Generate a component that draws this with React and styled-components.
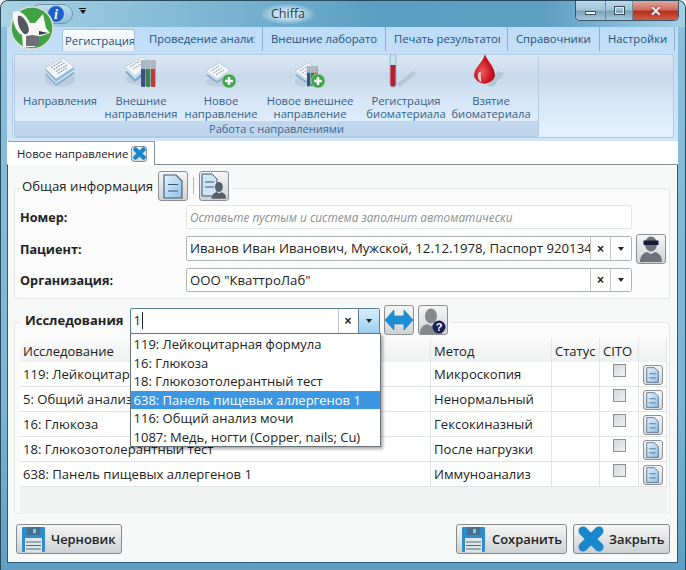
import React from "react";
import styled, { createGlobalStyle } from "styled-components";

const Global = createGlobalStyle`
  html, body { margin: 0; padding: 0; background: #fff; }
  body { font-family: "Open Sans", "Noto Sans", sans-serif; }
  * { box-sizing: border-box; }
`;

const Window = styled.div`
  position: relative; width: 686px; height: 570px; overflow: hidden;
  border-radius: 8px 8px 0 0; border: 1px solid #2a4a5e; border-bottom: 0;
  display: flex; flex-direction: column;
  background: linear-gradient(180deg, #8cbfdb 0%, #7db5d4 70%, #5f9fc3 100%);
`;
const TitleBar = styled.div`
  height: 26px; flex: none; position: relative; display: flex; align-items: flex-start; justify-content: center;
  background: linear-gradient(90deg, #a9d2e4 0%, #84bbd6 25%, #5b9ec3 55%, #5f9fc4 80%, #a4d0e4 100%);
`;
const Title = styled.div`
  margin-top: 3px; margin-right: 110px; padding: 0 10px; font-size: 12.5px; line-height: 20px; color: #2a3a44;
  background: radial-gradient(ellipse at center, rgba(225,240,247,.8) 30%, rgba(225,240,247,0) 75%);
`;
const QuickAccess = styled.div`
  position: absolute; left: 29px; top: 3px; width: 43px; height: 20px; border-radius: 10px;
  border: 1px solid #6e97ad; background: linear-gradient(180deg,#bcdcea,#8fbfd8);
`;
const QuickMenu = styled.div`
  position: absolute; left: 78px; top: 7px; display: flex; flex-direction: column; align-items: center; gap: 1px;
  &::before { content: ""; width: 7px; height: 1px; background: #111; }
  &::after { content: ""; border: 3.5px solid transparent; border-top: 4px solid #111; border-bottom: 0; }
`;
const LogoBox = styled.div`position: absolute; left: 9px; top: 5px; width: 44px; height: 44px; z-index: 3;`;
const InfoBox = styled.div`position: absolute; left: 46px; top: 4px; width: 18px; height: 18px; z-index: 2;`;
const WinButtons = styled.div`
  position: absolute; right: 6px; top: 0; height: 20px; display: flex; overflow: hidden;
  border: 1px solid #3c5566; border-top: 0; border-radius: 0 0 5px 5px;
`;
const WinBtn = styled.div`
  width: ${p => p.$w}px; display: flex; align-items: center; justify-content: center;
  border-left: ${p => (p.$first ? "0" : "1px solid #6d8fa3")};
  background: ${p => p.$close
    ? "linear-gradient(180deg,#e2a79c 0%,#cf6e5e 45%,#b5301f 55%,#cf5f48 100%)"
    : "linear-gradient(180deg,#bed9e8 0%,#a2c4d8 45%,#7ba3bb 55%,#a5c8da 100%)"};
`;
const MinGlyph = styled.i`display:block; width: 11px; height: 4px; margin-top: 5px; background:#eef5f9; border:1px solid #3c5566;`;
const MaxGlyph = styled.i`display:block; width: 11px; height: 9px; background:transparent; border:1px solid #34495a; box-shadow: inset 0 0 0 1px #dfeef5;`;
const CloseGlyph = styled.span`font: bold 14px/1 "Liberation Sans", sans-serif; color:#f4f0ee; text-shadow: 0 0 2px #5c1a10;`;

const Body = styled.div`flex: 1; display: flex; flex-direction: column; margin: 0 7px 7px 6px; min-height: 0;`;
const TabStrip = styled.div`
  height: 24px; flex: none; display: flex; padding-left: 55px;
  background: linear-gradient(180deg,#bcdcf7,#c4def7); align-items: flex-end;
`;
const Tab = styled.div`
  width: ${p => p.$w}px; height: ${p => (p.$active ? 22 : 24)}px;
  padding: 0 ${p => (p.$active ? 0 : 7)}px 0 ${p => (p.$active ? 2 : 8)}px; margin-right: ${p => (p.$active ? 6 : 0)}px;
  font-size: ${p => (p.$active ? 11.4 : 11.3)}px; line-height: ${p => (p.$active ? 22 : 24)}px; color: #23507a;
  background: ${p => (p.$active ? "linear-gradient(180deg,#fbfdff,#e4eff9)" : "transparent")};
  border: ${p => (p.$active ? "1px solid #a7c3dc" : "0")}; border-bottom: 0;
  border-right: ${p => (p.$active ? "1px solid #a7c3dc" : "1px solid #8fb0cc")};
  border-radius: ${p => (p.$active ? "3px 3px 0 0" : "0")};
`;
const TabLabel = styled.div`overflow: hidden; white-space: nowrap;`;
const Ribbon = styled.div`
  height: 90px; flex: none; padding: 3px 4px 3px 6px; background: linear-gradient(180deg,#c4def7,#d0e5f8);
`;
const RibbonInner = styled.div`
  height: 100%; margin-right: 0; width: 662px; margin-left: -1px; display: flex;
  border: 1px solid #b3cbe0; border-radius: 3px;
  background: linear-gradient(180deg,#dbe6f3 0%,#cfdeef 18%,#c6d8ea 26%,#d6e6f6 55%,#e4f2fd 100%);
`;
const Group = styled.div`
  width: 525px; display: flex; flex-direction: column; margin: 1px 0 0 1px;
  border: 1px solid #b3cbe0; border-top: 0; border-radius: 3px;
`;
const GroupItems = styled.div`flex: 1; display: flex; padding-left: 5px;`;
const RibbonBtn = styled.div`
  width: ${p => p.$w}px; display: flex; flex-direction: column; align-items: center; padding-top: 1px;
`;
const IconSlot = styled.div`
  height: 34px; width: 100%; padding: 0 ${p => p.$pr || 0}px 3px 0; display: flex; align-items: flex-end; justify-content: center;
`;
const RibbonText = styled.div`
  margin-top: 3px; font-size: 11.2px; line-height: 13px; color: #34608a; text-align: center; white-space: nowrap;
`;
const GroupLabel = styled.div`
  height: 15px; flex: none; text-align: center; font-size: 11px; line-height: 15px; color: #3b6690;
  background: linear-gradient(180deg,#c1d7ed,#bdd4eb);
`;

const DocTabs = styled.div`
  height: 24px; flex: none; display: flex; background: #fff; padding-left: 1px;
  border-bottom: 1px solid #858b8f;
`;
const DocTab = styled.div`
  width: 147px; height: 24px; display: flex; align-items: center; padding-left: 9px; gap: 3px;
  font-size: 11.3px; color: #222; background: #fff; border-top: 1px solid #99a; border-right: 1px solid #858b8f;
  position: relative;
`;
const DocClose = styled.span`
  width: 16px; height: 16px; display: flex; align-items: center; justify-content: center;
  border: 1px solid #8a9094; border-radius: 3px; background: linear-gradient(180deg,#f0f0f0,#d4d6d8);
`;
const Panel = styled.div`
  flex: 1; min-height: 0; background: #f7f8f8; padding: 6px 7px 0 6px; display: flex; flex-direction: column;
  border-left: 1px solid #2d5a78; border-right: 1px solid #2d5a78; border-bottom: 1px solid #2d5a78;
`;
const Field = styled.fieldset`
  margin: 0 0 6px 0; padding: 0 5px ${p => p.$pb}px 5px; min-width: 0; height: ${p => p.$h}px;
  border: 1px solid #e4e6e6; border-radius: 3px; background: #fbfbfb;
`;
const Legend = styled.legend`
  padding: 0 3px 4px ${p => p.$pl}px; margin-left: 0; height: 34px; display: flex; align-items: flex-start; background: transparent;
`;
const LegendText = styled.span`
  height: 30px; line-height: 30px; font-size: ${p => (p.$bold ? 13 : 13.2)}px; color: #222; margin-right: 5px;
  font-weight: ${p => (p.$bold ? 700 : 400)};
`;
const ToolBtn = styled.button`
  width: 30px; height: 30px; padding: 0; display: flex; align-items: center; justify-content: center;
  border: 1px solid #8a9094; border-radius: 3px; background: linear-gradient(180deg,#f5f5f5,#cfd2d4);
  margin-left: ${p => p.$ml || 0}px; flex: none;
`;
const Sep = styled.span`width: 1px; height: 17px; margin: 6px 5px 0 5px; background: #b4b8bb;`;
const Row = styled.div`
  display: flex; align-items: center; height: ${p => p.$h}px; margin-bottom: ${p => p.$mb}px;
`;
const Label = styled.div`width: 166px; flex: none; font-size: 12.7px; font-weight: 700; color: #222;`;
const Combo = styled.div`
  position: relative; width: ${p => p.$w}px; height: 100%; display: flex; background: #fff;
  border: 1px solid ${p => (p.$focus ? "#5c7f96" : p.$soft ? "#e3e5e6" : "#aeb3b6")}; border-radius: 2px;
`;
const ComboText = styled.div`
  flex: 1; min-width: 0; overflow: hidden; white-space: nowrap; padding-left: 3px;
  font-size: ${p => (p.$hint ? 11.8 : 13.2)}px; line-height: 23px;
  color: ${p => (p.$hint ? "#8b8f92" : "#222")}; font-style: ${p => (p.$hint ? "italic" : "normal")};
`;
const Caret = styled.span`display:inline-block; width:1px; height:17px; background:#222; margin: 3px 0 0 1px; vertical-align: top;`;
const ClearBtn = styled.div`
  width: 20px; flex: none; border-left: 1px solid #c3c7ca; background: #fff; display:flex; align-items:center; justify-content:center;
  font: bold 12px/1 "Liberation Sans", sans-serif; color: #222;
`;
const DropBtn = styled.div`
  width: 21px; flex: none; border-left: 1px solid ${p => (p.$on ? "#5c7f96" : "#c3c7ca")}; display:flex; align-items:center; justify-content:center;
  background: ${p => (p.$on ? "linear-gradient(180deg,#d8edfb,#9bcfee)" : "#fff")};
  &::after { content:""; border: 3.5px solid transparent; border-top: 4px solid #222; border-bottom: 0; }
`;
const SideBtn = styled(ToolBtn)`margin: -3px 0 -3px 4px;`;
const ComboHost = styled.div`height: 26px; margin: 3px 4px 0 1px; display: flex;`;
const Dropdown = styled.div`
  position: absolute; left: -1px; top: 24px; width: 251px; height: 114px; z-index: 5; padding: 1px 0 0;
  background: #fff; border: 1px solid #6c7378; box-shadow: 2px 2px 3px rgba(0,0,0,.35);
`;
const DropItem = styled.div`
  height: 18.6px; line-height: 18.6px; padding-left: 3px; font-size: 13px; white-space: nowrap;
  color: ${p => (p.$sel ? "#fff" : "#222")}; background: ${p => (p.$sel ? "#3b97e4" : "transparent")};
`;

const Grid = styled.div`
  margin: -1px 0 0 0; width: 647px; height: 176px; background: #f1f2f2;
  display: grid; grid-template-columns: 411px 121px 48px 39px 28px; grid-auto-rows: 25px;
`;
const HeadCell = styled.div`
  height: 24px; padding-left: 3px; font-size: 13px; line-height: 26px; color: #222; white-space: nowrap;
  background: linear-gradient(180deg,#fafafa,#eff0f0); border-right: 1px solid #e3e5e6;
`;
const Cell = styled.div`
  height: 25px; margin-top: -1px; background: #fff; border-right: 1px solid #e1e4e4; border-bottom: 1px solid #e1e4e4;
  padding-left: ${p => (p.$center ? 0 : 3)}px; font-size: 13.1px; line-height: 24px; color: #222; white-space: nowrap; overflow: hidden;
  display: ${p => (p.$center ? "flex" : "block")}; justify-content: center; align-items: flex-start;
`;
const Check = styled.span`
  width: 13px; height: 13px; margin-top: 2px; border: 1px solid #8e9193;
  background: linear-gradient(135deg,#d4d6d8,#f0f1f2);
`;
const RowBtn = styled.div`
  width: 20px; height: 20px; margin-top: 3px; display:flex; align-items:center; justify-content:center;
  border: 1px solid #8a9094; border-radius: 3px; background: linear-gradient(180deg,#f5f5f5,#d5d8da);
`;
const Footer = styled.div`
  flex: 1; display: flex; align-items: flex-start; padding: 4px 0 0 2px; gap: 6px;
`;
const FootBtn = styled.button`
  width: ${p => p.$w}px; height: 30px; display:flex; align-items:center; padding: 0 0 0 ${p => p.$pl}px; gap: ${p => p.$gap}px;
  border: 1px solid #858b8f; border-radius: 3px; background: linear-gradient(180deg,#f6f6f6,#cdd0d2);
  font: 600 12.9px "Open Sans", sans-serif; color: #222;
`;
const Spacer = styled.div`flex: 1;`;

const PaperStack = ({ w = 32, h = 30 }) => (
  <svg width={w} height={h} viewBox="0 0 32 30">
    <ellipse cx="16" cy="22" rx="15" ry="7" fill="#8ea7bc" opacity=".25" />
    <polygon points="1,16 19,6 31,15 12,28" fill="#7fa9c9" />
    <polygon points="1,14 19,4 31,13 12,26" fill="#cfe2f0" />
    <polygon points="1,12 19,2 31,11 12,24" fill="#93bad6" />
    <polygon points="1,10 19,0 30,9 12,21" fill="#f4f7fa" stroke="#9db4c6" strokeWidth=".5" />
    <path d="M7 9.5l11-6.5M9.5 11.5l11-6.5M12 13.5l11-6.5M14 15.5l9-5.5" stroke="#8d9aa5" strokeWidth="1.1" strokeDasharray="2 .8" />
  </svg>
);
const Plus = () => (
  <g>
    <circle cx="24" cy="18" r="7" fill="#3ea34a" stroke="#a9d9ad" strokeWidth=".8" />
    <path d="M24 14v8M20 18h8" stroke="#fff" strokeWidth="2.6" />
  </g>
);
const Tubes = ({ x = 15, s = 1 }) => (
  <g transform={`translate(${x} 3) scale(${s})`}>
    <rect x="0" y="0" width="4.4" height="27" rx="1.2" fill="#3f4f86" />
    <rect x="5" y="0" width="4.4" height="27" rx="1.2" fill="#3f7d55" />
    <rect x="10" y="0" width="4.4" height="27" rx="1.2" fill="#c23a35" />
    <rect x="0" y="0" width="14.4" height="9" fill="#b9c6d2" opacity=".85" />
  </g>
);
const NewPaper = ({ tubes }) => (
  <svg width="32" height="25" viewBox="0 0 32 25">
    <ellipse cx="14" cy="19" rx="13" ry="5" fill="#8ea7bc" opacity=".25" />
    <polygon points="1,12 14,5 25,12 12,20" fill="#7fa9c9" />
    <polygon points="1,10 14,3 25,10 12,18" fill="#cfe2f0" />
    <polygon points="1,8 14,0 25,7 12,16" fill="#f4f7fa" stroke="#9db4c6" strokeWidth=".5" />
    <path d="M6 8l8-5M8.5 10l8-5M11 12l8-5" stroke="#8d9aa5" strokeWidth="1" strokeDasharray="2 .8" />
    {tubes && <Tubes x={13} s={0.75} />}
    <Plus />
  </svg>
);
const PaperTubes = () => (
  <svg width="32" height="31" viewBox="0 0 32 31">
    <ellipse cx="14" cy="22" rx="13" ry="6" fill="#8ea7bc" opacity=".25" />
    <polygon points="0,15 16,6 25,13 10,25" fill="#7fa9c9" />
    <polygon points="0,12 17,2 25,9 10,22" fill="#cfe2f0" />
    <polygon points="0,10 18,0 25,6 10,19" fill="#f4f7fa" stroke="#9db4c6" strokeWidth=".5" />
    <path d="M5 10l10-6M8 12l10-6" stroke="#8d9aa5" strokeWidth="1" strokeDasharray="2 .8" />
    <Tubes x={16} />
  </svg>
);
const TestTube = () => (
  <svg width="28" height="34" viewBox="0 0 28 34">
    <polygon points="9,30 25,17 28,19 12,33" fill="#9ca7b0" opacity=".4" />
    <rect x="2" y="0" width="6" height="33" rx="2.6" fill="#c9dff0" stroke="#7f9db8" strokeWidth=".6" />
    <path d="M2.400 11h5.200v19a2.600 2.600 0 0 1-5.200 0z" fill="#bb1d2c" />
  </svg>
);
const Drop = () => (
  <svg width="34" height="34" viewBox="0 0 34 34">
    <polygon points="16,32 27,17 33,19 22,33" fill="#9ca7b0" opacity=".4" />
    <defs>
      <radialGradient id="dr" cx=".4" cy=".6" r=".7">
        <stop offset="0" stopColor="#ee5a5a" /><stop offset=".6" stopColor="#c9141f" /><stop offset="1" stopColor="#8e0d16" />
      </radialGradient>
    </defs>
    <path d="M14 0c1 6 10 12 10 22a11 11 0 0 1-21 0C3 13 12 9 14 0z" fill="url(#dr)" />
    <path d="M8 18c-2 4-1 8 2 10 1-3-1-5 0-10z" fill="#f6c9c9" />
  </svg>
);
const DocIcon = ({ w = 20, h = 25 }) => (
  <svg width={w} height={h} viewBox="0 0 20 25">
    <defs>
      <linearGradient id="dc" x1="0" y1="0" x2="1" y2="1">
        <stop offset="0" stopColor="#e3f0fb" /><stop offset="1" stopColor="#8fbfea" />
      </linearGradient>
    </defs>
    <path d="M1 1h12l6 6v17H1z" fill="url(#dc)" stroke="#3b5672" strokeWidth="1.1" />
    <path d="M5 10.500h10M5 17h10" stroke="#3b5672" strokeWidth="1.1" />
  </svg>
);
const Person = ({ fill = "#6d7378" }) => (
  <g>
    <ellipse cx="12" cy="9" rx="6" ry="7.500" fill={fill} />
    <path d="M1 27c0-7 4-9 7-10l4 2 4-2c3 1 7 3 7 10z" fill={fill} />
  </g>
);
const DocPerson = () => (
  <svg width="26" height="27" viewBox="0 0 26 27">
    <path d="M1 1h10l5 5v17H1z" fill="#d0e4f6" stroke="#3b5672" />
    <path d="M4 9h9M4 14h9" stroke="#3b5672" />
    <g transform="translate(10 8) scale(.66)"><Person fill="#56606a" /></g>
  </svg>
);
const PatientIcon = () => (
  <svg width="26" height="27" viewBox="0 0 24 27">
    <Person />
    <rect x="4.500" y="5.500" width="15" height="4.500" fill="#161a3a" />
  </svg>
);
const HelpIcon = () => (
  <svg width="28" height="27" viewBox="0 0 28 27">
    <Person fill="#84898d" />
    <circle cx="20" cy="20" r="6.500" fill="#1c1f52" />
    <text x="20" y="24" textAnchor="middle" fontFamily="Liberation Sans" fontWeight="700" fontSize="11" fill="#fff">?</text>
  </svg>
);
const Swap = () => (
  <svg width="28" height="22" viewBox="0 0 28 22">
    <path d="M0 11L9 1v6h10V1l9 10-9 10v-6H9v6z" fill="#1b8fd6" stroke="#1673ae" strokeWidth=".6" />
  </svg>
);
const XIcon = ({ s = 13 }) => (
  <svg width={s} height={s} viewBox="0 0 26 26">
    <path d="M5 5L21 21M21 5L5 21" stroke="#1a86cc" strokeWidth="9" strokeLinecap="round" />
  </svg>
);
const Floppy = () => (
  <svg width="23" height="25" viewBox="0 0 23 25">
    <rect x="0" y="0" width="23" height="25" rx="1" fill="#2f8cc8" />
    <rect x="5" y="0" width="13" height="8" fill="#47708c" />
    <rect x="11" y="2" width="3" height="4" fill="#9fc0d4" />
    <rect x="3" y="11" width="17" height="14" fill="#dfe6ea" />
    <path d="M4 15h15M4 18.500h15M4 22h15" stroke="#5a6a75" strokeWidth="1" />
  </svg>
);
const Logo = () => (
  <svg width="44" height="44" viewBox="0 0 44 44">
    <circle cx="22" cy="22" r="21" fill="#3fa344" stroke="#d6dcd6" strokeWidth="1.600" />
    <path d="M3 6c6-3 13 2 17 11l5 0L33 8l3 14 4 5-9 3-5 1-1 10H13l-1-12C5 26 2 14 3 6z" fill="#f7f8f7" />
    <path d="M8 10c4-2 10 6 11 14-1 5-4 5-6 3-4-4-6-11-5-17z" fill="#55595d" />
    <path d="M16 30l6-1 7 1 0 10H16z" fill="#6d7175" />
    <path d="M29 25l9 2-9 2z" fill="#3a3d40" />
  </svg>
);
const Info = () => (
  <svg width="18" height="18" viewBox="0 0 18 18">
    <circle cx="9" cy="9" r="8.500" fill="#1e5fd0" stroke="#b8d0ea" />
    <text x="9" y="14" textAnchor="middle" fontFamily="Liberation Serif" fontStyle="italic" fontWeight="700" fontSize="14" fill="#fff">i</text>
  </svg>
);

const tabs = [
  ["Регистрация", 73, true], ["Проведение анализов", 122], ["Внешние лаборатории", 123],
  ["Печать результатов", 122], ["Справочники", 92], ["Настройки", 75],
];
const ribbon = [
  [<PaperStack />, ["Направления"], 80, 0], [<PaperTubes />, ["Внешние", "направления"], 82, 0],
  [<NewPaper />, ["Новое", "направление"], 78, 0], [<NewPaper tubes />, ["Новое внешнее", "направление"], 100, 0],
  [<TestTube />, ["Регистрация", "биоматериала"], 92, 8], [<Drop />, ["Взятие", "биоматериала"], 78, 6],
];
const rows = [
  ["119: Лейкоцитарная формула", "Микроскопия"], ["5: Общий анализ мочи", "Ненормальный"],
  ["16: Глюкоза", "Гексокиназный"], ["18: Глюкозотолерантный тест", "После нагрузки"],
  ["638: Панель пищевых аллергенов 1", "Иммуноанализ"],
];
const options = [
  "119: Лейкоцитарная формула", "16: Глюкоза", "18: Глюкозотолерантный тест",
  "638: Панель пищевых аллергенов 1", "116: Общий анализ мочи", "1087: Медь, ногти (Copper, nails; Cu)",
];

export default function App() {
  return (
    <Window>
      <Global />
      <TitleBar>
        <QuickAccess />
        <InfoBox><Info /></InfoBox>
        <QuickMenu />
        <LogoBox><Logo /></LogoBox>
        <Title>Chiffa</Title>
        <WinButtons>
          <WinBtn $w={29} $first><MinGlyph /></WinBtn>
          <WinBtn $w={27}><MaxGlyph /></WinBtn>
          <WinBtn $w={46} $close><CloseGlyph>✕</CloseGlyph></WinBtn>
        </WinButtons>
      </TitleBar>
      <Body>
        <TabStrip>
          {tabs.map(([t, w, a]) => <Tab key={t} $w={w} $active={a}><TabLabel>{t}</TabLabel></Tab>)}
        </TabStrip>
        <Ribbon>
          <RibbonInner>
            <Group>
              <GroupItems>
                {ribbon.map(([icon, lines, w, pr]) => (
                  <RibbonBtn key={lines.join()} $w={w}>
                    <IconSlot $pr={pr}>{icon}</IconSlot>
                    <RibbonText>{lines.map(l => <div key={l}>{l}</div>)}</RibbonText>
                  </RibbonBtn>
                ))}
              </GroupItems>
              <GroupLabel>Работа с направлениями</GroupLabel>
            </Group>
          </RibbonInner>
        </Ribbon>
        <DocTabs>
          <DocTab>Новое направление <DocClose><XIcon s={13} /></DocClose></DocTab>
        </DocTabs>
        <Panel>
          <Field $h={128} $pb={0}>
            <Legend $pl={2}>
              <LegendText>Общая информация</LegendText>
              <ToolBtn><DocIcon /></ToolBtn>
              <Sep />
              <ToolBtn><DocPerson /></ToolBtn>
            </Legend>
            <Row $h={24} $mb={7}>
              <Label>Номер:</Label>
              <Combo $w={446} $soft><ComboText $hint>Оставьте пустым и система заполнит автоматически</ComboText></Combo>
            </Row>
            <Row $h={25} $mb={7}>
              <Label>Пациент:</Label>
              <Combo $w={446}>
                <ComboText>Иванов Иван Иванович, Мужской, 12.12.1978, Паспорт 9201345678</ComboText>
                <ClearBtn>×</ClearBtn><DropBtn />
              </Combo>
              <SideBtn><PatientIcon /></SideBtn>
            </Row>
            <Row $h={24} $mb={0}>
              <Label>Организация:</Label>
              <Combo $w={446}>
                <ComboText>ООО "КваттроЛаб"</ComboText>
                <ClearBtn>×</ClearBtn><DropBtn />
              </Combo>
            </Row>
          </Field>
          <Field $h={209} $pb={0}>
            <Legend $pl={5}>
              <LegendText $bold>Исследования</LegendText>
              <ComboHost>
                <Combo $w={250} $focus>
                  <ComboText>1<Caret /></ComboText>
                  <ClearBtn>×</ClearBtn><DropBtn $on />
                  <Dropdown>
                    {options.map((o, i) => <DropItem key={o} $sel={i === 3}>{o}</DropItem>)}
                  </Dropdown>
                </Combo>
              </ComboHost>
              <ToolBtn><Swap /></ToolBtn>
              <ToolBtn $ml={4}><HelpIcon /></ToolBtn>
            </Legend>
            <Grid>
              <HeadCell>Исследование</HeadCell><HeadCell>Метод</HeadCell><HeadCell>Статус</HeadCell><HeadCell>CITO</HeadCell><HeadCell />
              {rows.map(([a, b]) => (
                <React.Fragment key={a}>
                  <Cell>{a}</Cell><Cell>{b}</Cell><Cell />
                  <Cell $center><Check /></Cell>
                  <Cell $center><RowBtn><DocIcon w={13} h={16} /></RowBtn></Cell>
                </React.Fragment>
              ))}
            </Grid>
          </Field>
          <Footer>
            <FootBtn $w={106} $pl={5} $gap={6}><Floppy />Черновик</FootBtn>
            <Spacer />
            <FootBtn $w={111} $pl={5} $gap={7}><Floppy />Сохранить</FootBtn>
            <FootBtn $w={97} $pl={4} $gap={5}><XIcon s={26} />Закрыть</FootBtn>
          </Footer>
        </Panel>
      </Body>
    </Window>
  );
}
